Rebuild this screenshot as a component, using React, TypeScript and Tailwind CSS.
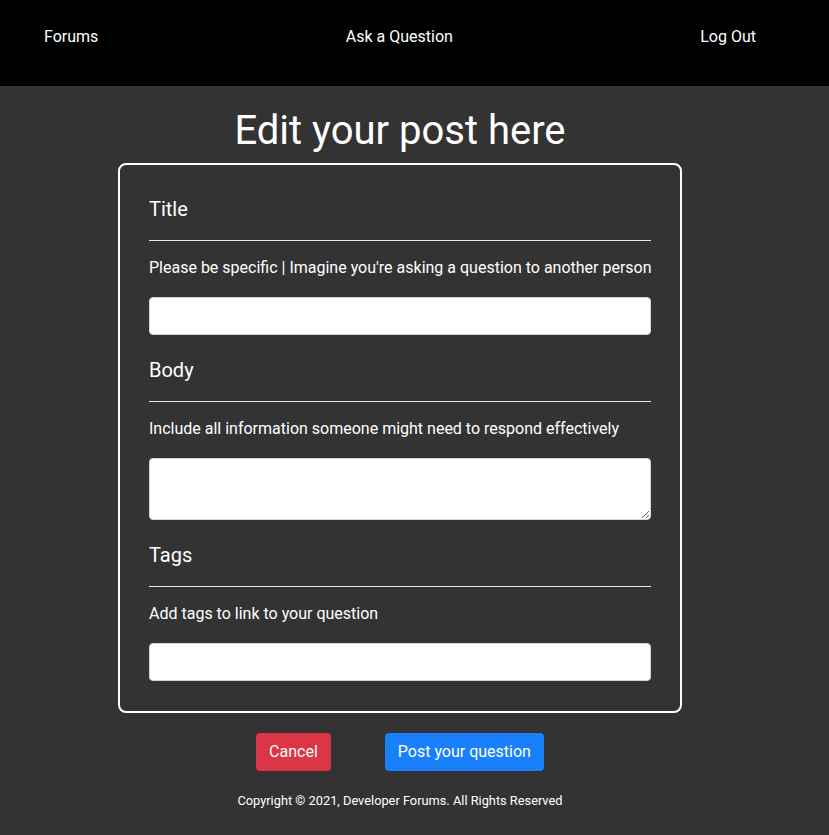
const Field = ({
  label,
  hint,
  multiline,
  first,
}: {
  label: string;
  hint: string;
  multiline?: boolean;
  first?: boolean;
}) => (
  <div className={first ? '' : 'mt-[23px]'}>
    <h5 className="text-[20px] leading-[24px] text-white">{label}</h5>
    <hr className="mt-[19px] border-0 border-t border-[#e6e6e6]" />
    <p className="mt-[15px] whitespace-nowrap text-[16px] leading-[24px] text-white">{hint}</p>
    {multiline ? (
      <textarea className="mt-[17px] block h-[62px] w-full rounded-[4px] border border-[#ced4da] bg-white px-3 py-1.5 text-[16px] text-[#495057] outline-none" />
    ) : (
      <input
        type="text"
        className="mt-[17px] block h-[38px] w-full rounded-[4px] border border-[#ced4da] bg-white px-3 text-[16px] text-[#495057] outline-none"
      />
    )}
  </div>
);

const App = () => {
  return (
    <div className="min-h-screen bg-[#333333] font-['Roboto',sans-serif] text-white">
      {/* Nav */}
      <nav className="h-[86px] bg-black">
        <div className="flex w-[800px] justify-between px-[44px] pt-[25px] text-[16px] leading-[24px]">
          <a href="#" className="text-white">Forums</a>
          <a href="#" className="text-white">Ask a Question</a>
          <a href="#" className="text-white">Log Out</a>
        </div>
      </nav>

      <main className="w-[800px]">
        <h1 className="pt-[21px] text-center text-[40px] leading-[48px]">Edit your post here</h1>

        {/* Form card */}
        <div className="mx-auto mt-[8px] w-[564px] rounded-[8px] border-2 border-white px-[29px] pb-[30px] pt-[32px]">
          <Field
            first
            label="Title"
            hint="Please be specific | Imagine you're asking a question to another person"
          />
          <Field
            label="Body"
            hint="Include all information someone might need to respond effectively"
            multiline
          />
          <Field label="Tags" hint="Add tags to link to your question" />
        </div>

        {/* Actions */}
        <div className="mt-[20px] flex justify-center gap-[54px]">
          <button className="h-[38px] rounded-[4px] bg-[#dc3545] px-[13px] text-[16px] text-white">
            Cancel
          </button>
          <button className="h-[38px] rounded-[4px] bg-[#1a7ffb] px-[13px] text-[16px] text-white">
            Post your question
          </button>
        </div>

        <footer className="mt-[21px] pb-6 text-center text-[12.8px] leading-[18px]">
          Copyright © 2021, Developer Forums. All Rights Reserved
        </footer>
      </main>
    </div>
  );
};

export default App;
